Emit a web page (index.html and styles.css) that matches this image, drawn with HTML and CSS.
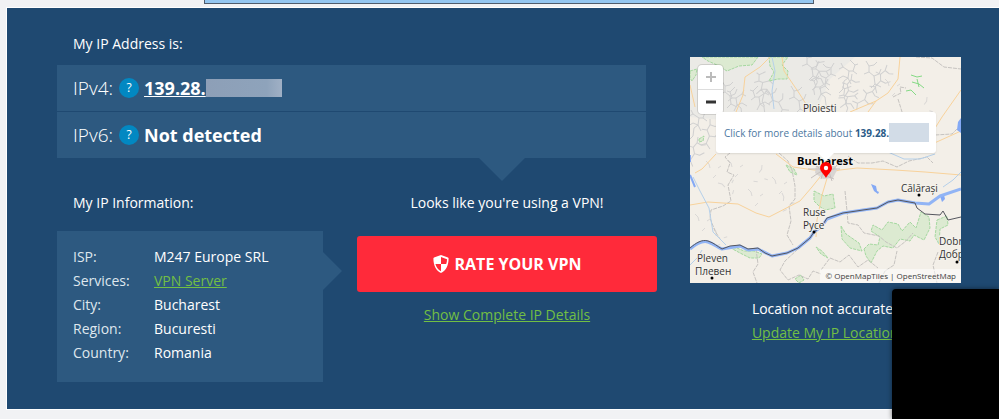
FILE: index.html
```
<!DOCTYPE html>
<html lang="en">
  <head>
    <meta charset="UTF-8" />
    <meta name="viewport" content="width=device-width, initial-scale=1.0" />
    <title>What Is My IP Address</title>
    <link rel="stylesheet" href="styles.css">
  </head>
  <body>
    <div class="banner"></div>
    <main class="panel">
      <div class="details">
        <h2 class="title">My IP Address is:</h2>
        <div class="ip-list">
          <div class="ip-row">
            <span class="ip-label">IPv4:</span>
            <button class="help" type="button" aria-label="About IPv4">?</button>
            <a class="ip-value" href="#">139.28.</a><span class="mask"></span>
          </div>
          <div class="ip-row">
            <span class="ip-label">IPv6:</span>
            <button class="help" type="button" aria-label="About IPv6">?</button>
            <span class="ip-value">Not detected</span>
          </div>
        </div>
        <div class="columns">
          <section>
            <h2 class="title">My IP Information:</h2>
            <div class="info-box">
              <table class="info">
                <tr><th scope="row">ISP:</th><td>M247 Europe SRL</td></tr>
                <tr><th scope="row">Services:</th><td><a href="#">VPN Server</a></td></tr>
                <tr><th scope="row">City:</th><td>Bucharest</td></tr>
                <tr><th scope="row">Region:</th><td>Bucuresti</td></tr>
                <tr><th scope="row">Country:</th><td>Romania</td></tr>
              </table>
            </div>
          </section>
          <section class="vpn">
            <h2 class="title">Looks like you're using a VPN!</h2>
            <button class="rate" type="button">
              <svg class="shield" viewBox="0 0 16 18" aria-hidden="true">
                <path fill="#fff" fill-rule="evenodd" d="M8 0L15 2.6Q15.6 2.9 15.6 3.6C15.6 10.5 13 15.8 8 18C3 15.8.4 10.5.4 3.6Q.4 2.9 1 2.6ZM8 2.1V9H13.2C13.8 7.4 14 5.8 14 4.2ZM8 9H2.4C3.3 12.3 5.1 14.8 8 16.2Z" />
              </svg>
              RATE YOUR VPN
            </button>
            <a class="more" href="#">Show Complete IP Details</a>
          </section>
        </div>
      </div>

      <aside class="location">
        <div class="map">
          <svg class="map-tiles" viewBox="0 0 271 226" preserveAspectRatio="xMidYMid slice" role="img" aria-label="Map of Bucharest">
            <defs>
              <path id="ridge" d="M0 4l3 1 2 6 4 0 1 7 4 3M3 5l5-5M5 11l-4 3M9 11l6-4 2-4M10 18l5-2 5 3M10 18l-3 6M14 21l1 8 4 4M15 7l4 2" />
              <path id="spur" d="M0 0l3 5 0 6 5 4 1 8M3 5l5-1 3-3M3 11l-5 2M8 15l5-2 2-5M9 23l-4 4M9 23l6 3" />
              <path id="hill" d="M0 0l3 3 1 4M12 7l3-2M7 17l3-3" />
            </defs>
            <rect width="271" height="226" fill="#f3efe8" />

            <!-- mountains -->
            <path fill="#ebeae6" d="M0 0H165L140 22 125 58 65 66 0 60Z" />
            <g class="ridges">
              <use href="#spur" x="32" y="24" />
              <use href="#ridge" x="37" y="30" />
              <use href="#ridge" transform="translate(68 12) rotate(20)" />
              <use href="#ridge" x="60" y="29" />
              <use href="#spur" transform="translate(76 34) rotate(-20)" />
              <use href="#spur" x="101" y="29" />
              <use href="#ridge" transform="translate(128 0) rotate(35)" />
              <use href="#ridge" x="121" y="19" />
              <use href="#spur" transform="translate(144 6) scale(-1 1)" />
              <use href="#ridge" transform="translate(168 3) scale(-1 1)" />
              <use href="#spur" transform="translate(162 17) rotate(40)" />
              <use href="#ridge" transform="translate(154 26) rotate(25)" />
              <use href="#spur" x="176" y="4" />
              <use href="#spur" transform="translate(197 8) rotate(50)" />
              <use href="#spur" transform="translate(186 30) rotate(70)" />
              <use href="#spur" x="114" y="-4" />
              <use href="#ridge" transform="translate(18 50) scale(-1 1)" />
              <use href="#spur" transform="translate(20 62) rotate(30)" />
              <use href="#spur" transform="translate(8 80) rotate(40)" />
            </g>
            <g class="hills">
              <use href="#hill" x="38" y="103" />
              <use href="#hill" transform="translate(72 108) rotate(50)" />
              <use href="#hill" x="82" y="120" />
              <use href="#hill" transform="translate(28 126) rotate(-30)" />
              <use href="#hill" x="58" y="132" />
              <use href="#hill" transform="translate(92 136) rotate(20)" />
              <use href="#hill" x="5" y="157" />
              <use href="#hill" transform="translate(24 171) rotate(15)" />
              <use href="#hill" x="195" y="22" />
              <use href="#hill" transform="translate(237 40) rotate(50)" />
              <use href="#hill" x="16" y="104" />
            </g>

            <!-- forests -->
            <g class="forest">
              <path d="M12 0H68L62 8 49 9 37 14 27 8 18 4Z" />
              <path d="M79 0H98L92 8 98 14 97 22 88 22 79 24 84 15 80 9Z" />
              <path d="M0 14L7 12 6 18 2 24 0 21Z" />
              <path d="M124 134L134 139 143 137 145 151 135 153 129 149 124 144Z" />
              <path d="M39 190l8 1 7 3 10 0 8 3-3 4-9 0-10-5z" />
              <path d="M151 169l5 8 13 9 3 8-12-3-8-9z" />
              <path d="M174 192l5-5 9 1 2-8-9-6 2-6 9 5 6-8 10 2 4 7 8-9 6 6 5-16 8 5 1 11-6 12-10-5-4 6-10-2-7 9-10-2-6 5-6 12-5-7z" />
              <path d="M247 163l10-4 1 9-8 4-1 15-4-7z" />
              <path d="M126 190l6 4 6 7-7-4z" />
              <path d="M105 222l6-4 3 5-5 3z" />
              <path d="M96 108l8 4 3 6-7-3z" />
              <path d="M9 82l5-3-1 5-4 1z" />
            </g>
            <path class="scrub" d="M221 18l6 2 5-1M222 25l7 2 5 4M216 34l5-1 5 5M227 22l2 8" />

            <!-- borders -->
            <path class="border" d="M40 96l-5 4 5 6-3 9 7 3-6 10 3 16-8 5-12 4-1 8 5 13 5 8M89 96l9 8 4 9 3 16 0 13-6 7 2 15-4 14 6 10M155 134l2 20 1 12 10 2 6 8 15 3 7 6 11 6 9-7 7-8M66 192l2 15-5 8 4 11M108 192l-13 12-5 9 8 10 11-5 9 4 5-8 8 3M131 213l9-12 10 4 9-7 9 12 10-7 10 8M189 226l6-12 9-6 3-14M248 195l-5 13 4 18M158 99l10 7 14 0 11-2 14 6 12-6 18-4 6 6" />
            <path class="border" d="M203 40l8-4-1-6 6 1M208 42l5 16 10 8 22 12 17-1 9-9M226 0l16 1 12 9 17 2" />

            <!-- roads -->
            <g class="roads">
              <path d="M80 0L70 10 55 20 53 38 46 55M92 0L94 14 109 36 121 55M210 0L208 22 198 36 186 44 160 55M186 44L178 55M271 33L252 60 242 76M0 28L5 50M26 97L12 112 5 116" />
              <path d="M0 148L18 145 48 147 66 156 79 160 110 144 122 130 134 115M86 97L103 110 131 114M136 116L150 113 167 111 205 113 235 115 271 118M138 118L132 138 127 163 126 180M200 92L240 88 271 74" />
            </g>

            <!-- city -->
            <path fill="#d9d5d2" d="M126 108l8-4 9 2 4 7-4 8-10 1-8-6z" />
            <path class="streets" d="M118 104l10 6 6 8 10 4M121 121l9-6 14-3 6-8M128 104l6 8-3 10M142 103l-3 12 3 9M118 112h32" />

            <!-- rivers -->
            <path class="stream" d="M82 0L85 14 82 34 84 52M3 120L10 134 19 151 23 175 36 188M0 208L8 200 12 193M198 95L214 102 230 102 245 97" />
            <path class="water" d="M0 118l5 12M0 98v7" />
            <path fill="#84a9f5" d="M181 127l5 2 1 5 2 1-1 2-4-3zM250 139l4-1 1 4-3 3zM271 61l-3 4-1 8 4 3z" />
            <path class="stream" d="M253 130l10-7 8-8" />
            <path class="danube" d="M0 192C6 187 12 183 18 185S27 190 32 192L50 189 58 193 68 192 82 199 97 196 108 191 120 181 124 175 132 169 137 162 153 156 173 153 187 151 198 145 208 143 225 146 239 147 250 139 271 132" />
            <path class="frontier" d="M0 191C6 186 12 182 18 184S27 189 32 192L40 189 50 188 58 192 68 191 75 196 82 199 97 196 108 191 120 181 124 175 132 169 137 161 153 156 173 153 187 151 198 145 208 143 225 146 227 151 235 157 250 158 253 154 258 163 271 160" />

            <!-- place names -->
            <g class="places">
              <text x="113" y="55">Ploiești</text>
              <text class="capital" x="135" y="108">Bucharest</text>
              <text x="211" y="135">Călărași</text>
              <text x="113" y="159">Ruse</text>
              <text x="113" y="172">Русе</text>
              <text x="7" y="205">Pleven</text>
              <text x="5" y="218">Плевен</text>
              <text x="249" y="188">Dobrich</text>
              <text x="249" y="201">Добрич</text>
            </g>
            <circle cx="229" cy="138" r="1.500" />
            <circle cx="124" cy="175" r="1.500" />
            <circle cx="22" cy="221" r="1.500" />
            <circle cx="267" cy="205" r="1.500" />
          </svg>
          <div class="zoom">
            <button type="button" aria-label="Zoom in" disabled><svg viewBox="0 0 10 10"><path d="M5 0V10M0 5H10" /></svg></button>
            <button type="button" aria-label="Zoom out"><svg viewBox="0 0 10 10"><path d="M0 5H10" /></svg></button>
          </div>
          <div class="popup">
            <a href="#">Click for more details about <b>139.28.</b></a><span class="popup-mask"></span>
          </div>
          <svg class="pin" viewBox="0 0 12 16" aria-hidden="true">
            <path fill="#f00" d="M6 16C4.500 12.500 0 9.500 0 6A6 6 0 0 1 12 6C12 9.500 7.500 12.500 6 16Z" />
            <circle cx="6" cy="6" r="2.200" fill="#fff" />
          </svg>
          <div class="credits">© <a href="#">OpenMapTiles</a> | <a href="#">OpenStreetMap</a></div>
        </div>
        <p class="accuracy">
          Location not accurate?<br>
          <a href="#">Update My IP Location</a>
        </p>
      </aside>
    </main>
    <div class="video"></div>
  </body>
</html>
```

FILE: styles.css
```
* {
  box-sizing: border-box;
}

body {
  margin: 0;
  background: #f1f2f4;
  color: #fff;
  font-family: "Open Sans", sans-serif;
  font-size: 14px;
  line-height: 24px;
}

button {
  padding: 0;
  border: 0;
  font-family: inherit;
  cursor: pointer;
}

.banner {
  width: 610px;
  max-width: 100%;
  height: 4px;
  margin-left: 204px;
  background: #94c6f0;
  border: 1px solid #4f5b6b;
  border-top: 0;
}

.panel {
  display: grid;
  grid-template-columns: 1fr 271px;
  gap: 33px;
  margin: 3px 0 0 6px;
  padding: 24px 38px 27px 50px;
  background: #1f4971;
  border: 1px solid #fff;
  border-right: 0;
}

.title {
  margin: 0;
  font-size: 14px;
  font-weight: 500;
}

.details > .title,
.columns section:first-child .title {
  padding-left: 16px;
}

.ip-list {
  position: relative;
  display: grid;
  gap: 1px;
  margin: 9px 11px 33px 0;
}

.ip-list::after {
  content: "";
  position: absolute;
  top: 100%;
  right: 121px;
  border: 23px solid transparent;
  border-top-color: #2d5980;
  border-bottom: 0;
}

.ip-row {
  display: flex;
  align-items: center;
  height: 46px;
  padding-left: 16px;
  background: #2d5980;
  font-size: 18px;
}

.ip-label {
  font-size: 19px;
  font-weight: 300;
}

.help {
  width: 20px;
  height: 20px;
  margin: 0 5px 0 6px;
  border-radius: 50%;
  background: #0288c2;
  color: #fff;
  font-size: 12px;
  line-height: 20px;
}

.ip-value {
  color: #fff;
  font-weight: 700;
}

.mask {
  width: 76px;
  height: 18px;
  background: linear-gradient(90deg, #8d9fb7, #8ea3bb 80%, #a0b0c5);
}

.columns {
  display: grid;
  grid-template-columns: 1fr 300px;
  gap: 34px;
}

.info-box {
  position: relative;
  margin-top: 16px;
  padding: 14px 16px 17px;
  background: #2d5980;
}

.info-box::after {
  content: "";
  position: absolute;
  top: 21px;
  left: 100%;
  border: 19px solid transparent;
  border-left-color: #2d5980;
  border-right: 0;
}

.info {
  border-collapse: collapse;
}

.info th,
.info td {
  padding: 0;
  font-weight: 500;
  text-align: left;
}

.info th {
  width: 81px;
  color: #dfe7ee;
  font-weight: 400;
}

.info a,
.more,
.accuracy a {
  color: #72bf44;
  font-weight: 400;
}

.vpn {
  display: flex;
  flex-direction: column;
  align-items: center;
}

.rate {
  display: flex;
  align-items: center;
  justify-content: center;
  gap: 6px;
  width: 100%;
  height: 56px;
  margin: 21px 0 11px;
  border-radius: 3px;
  background: #ff2a3a;
  color: #fff;
  font-size: 16px;
  font-weight: 700;
}

.shield {
  width: 16px;
  height: 18px;
}

.location {
  display: flex;
  flex-direction: column;
  align-items: center;
  padding-top: 25px;
}

.map {
  position: relative;
  width: 100%;
  overflow: hidden;
  font-size: 10px;
}

.map-tiles {
  display: block;
  width: 100%;
}

.map-tiles path,
.map-tiles use {
  stroke-linejoin: round;
}

.ridges {
  fill: none;
  stroke: #d0d0d0;
}

.hills {
  fill: none;
  stroke: #dad8d6;
}

.forest {
  fill: #dcead1;
  stroke: #a5d8a0;
  stroke-dasharray: 3 1;
}

.scrub {
  fill: none;
  stroke: #85da85;
}

.border {
  fill: none;
  stroke: #c6c3c0;
  stroke-dasharray: 4 1;
}

.roads {
  fill: none;
  stroke: #f8d29b;
}

.streets {
  fill: none;
  stroke: #c5bfbd;
}

.stream {
  fill: none;
  stroke: #b5d0ea;
}

.water {
  fill: none;
  stroke: #84a9f5;
  stroke-width: 2;
}

.danube {
  fill: none;
  stroke: #91b4f5;
  stroke-width: 3;
}

.frontier {
  fill: none;
  stroke: #55565e;
}

.places {
  fill: #333;
  font-size: 10px;
  paint-order: stroke;
  stroke: #f5f2ec;
  stroke-width: 2px;
}

.capital {
  fill: #000;
  font-size: 11px;
  font-weight: 700;
  text-anchor: middle;
}

.zoom {
  position: absolute;
  top: 8px;
  left: 8px;
  display: grid;
  width: 25px;
  border-radius: 4px;
  background: #fff;
  box-shadow: 0 0 0 1px rgba(0, 0, 0, 0.12);
}

.zoom button {
  height: 24px;
  background: none;
}

.zoom button + button {
  height: 25px;
  border-top: 1px solid #ddd;
}

.zoom svg {
  width: 10px;
  height: 10px;
  fill: none;
  stroke: #333;
  stroke-width: 3;
}

.zoom button:disabled svg {
  stroke: #bbb;
  stroke-width: 2;
}

.popup {
  position: absolute;
  top: 55px;
  left: 26px;
  display: flex;
  align-items: center;
  width: 220px;
  height: 41px;
  padding-left: 8px;
  border-radius: 3px;
  background: #fff;
  box-shadow: 0 1px 2px rgba(0, 0, 0, 0.1);
  white-space: nowrap;
}

.popup::after {
  content: "";
  position: absolute;
  top: 100%;
  left: 102px;
  border: 8px solid transparent;
  border-top-color: #fff;
  border-bottom: 0;
}

.popup a {
  color: #4b779f;
  text-decoration: none;
}

.popup b {
  color: #2b5b88;
}

.popup-mask {
  width: 40px;
  height: 19px;
  background: #d2dce7;
}

.pin {
  position: absolute;
  top: 105px;
  left: 130px;
  width: 12px;
  height: 16px;
}

.credits {
  position: absolute;
  right: 0;
  bottom: 0;
  padding: 0 5px;
  background: rgba(255, 255, 255, 0.5);
  color: #404040;
  font-size: 8px;
  line-height: 14px;
}

.credits a {
  color: inherit;
  text-decoration: none;
}

.accuracy {
  margin: 14px 0 0;
  font-weight: 500;
}

.video {
  position: fixed;
  right: 0;
  bottom: 0;
  width: 107px;
  height: 130px;
  border-radius: 4px 0 0 0;
  background: #000;
  box-shadow: 0 0 5px rgba(0, 0, 0, 0.5);
}
```
